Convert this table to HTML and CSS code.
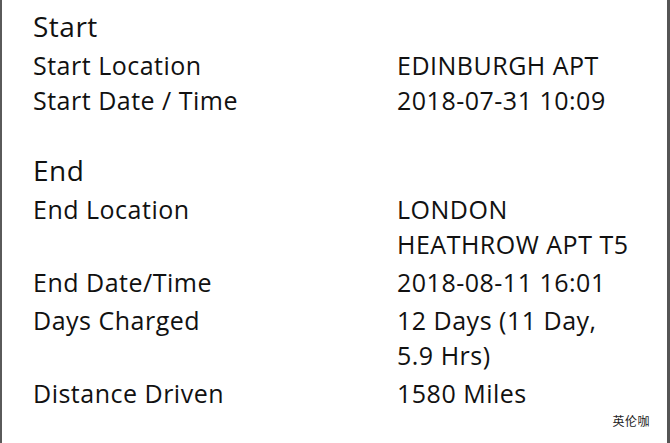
FILE: index.html
```html
<!DOCTYPE html>
<html>
<head>
<meta charset="utf-8">
<link rel="stylesheet" href="styles.css">
</head>
<body>
<div class="frame">
  <h2 class="section-title first">Start</h2>
  <div class="rows">
    <div class="label">Start Location</div><div class="value">EDINBURGH APT</div>
    <div class="label">Start Date / Time</div><div class="value">2018-07-31 10:09</div>
  </div>
  <h2 class="section-title">End</h2>
  <div class="rows spaced">
    <div class="label">End Location</div><div class="value">LONDON<br>HEATHROW APT T5</div>
    <div class="label">End Date/Time</div><div class="value">2018-08-11 16:01</div>
    <div class="label">Days Charged</div><div class="value">12 Days (11 Day,<br>5.9 Hrs)</div>
    <div class="label">Distance Driven</div><div class="value">1580 Miles</div>
  </div>
  <div class="watermark">英伦咖</div>
</div>
</body>
</html>
```

FILE: styles.css
```css
html, body {
  margin: 0;
  padding: 0;
  background: #fff;
}
.frame {
  box-sizing: border-box;
  width: 670px;
  height: 443px;
  border-left: 2px solid #5a5a5a;
  border-right: 3px solid #555;
  padding-left: 31px;
  font-family: "Open Sans", sans-serif;
  color: #111;
  position: relative;
}
.section-title {
  margin: 0 0 4px;
  font-weight: normal;
  font-size: 28px;
  letter-spacing: 0.5px;
  line-height: 36px;
  padding-top: 34px;
}
.section-title.first {
  padding-top: 8px;
}
.rows {
  display: grid;
  grid-template-columns: 364px auto;
  font-size: 25px;
  letter-spacing: 0.5px;
  line-height: 35px;
}
.rows.spaced {
  row-gap: 3px;
}
.watermark {
  position: absolute;
  right: 17px;
  bottom: 14px;
  font-family: "Noto Sans CJK SC", sans-serif;
  font-size: 12px;
  letter-spacing: 0.5px;
  color: #222;
}
```
